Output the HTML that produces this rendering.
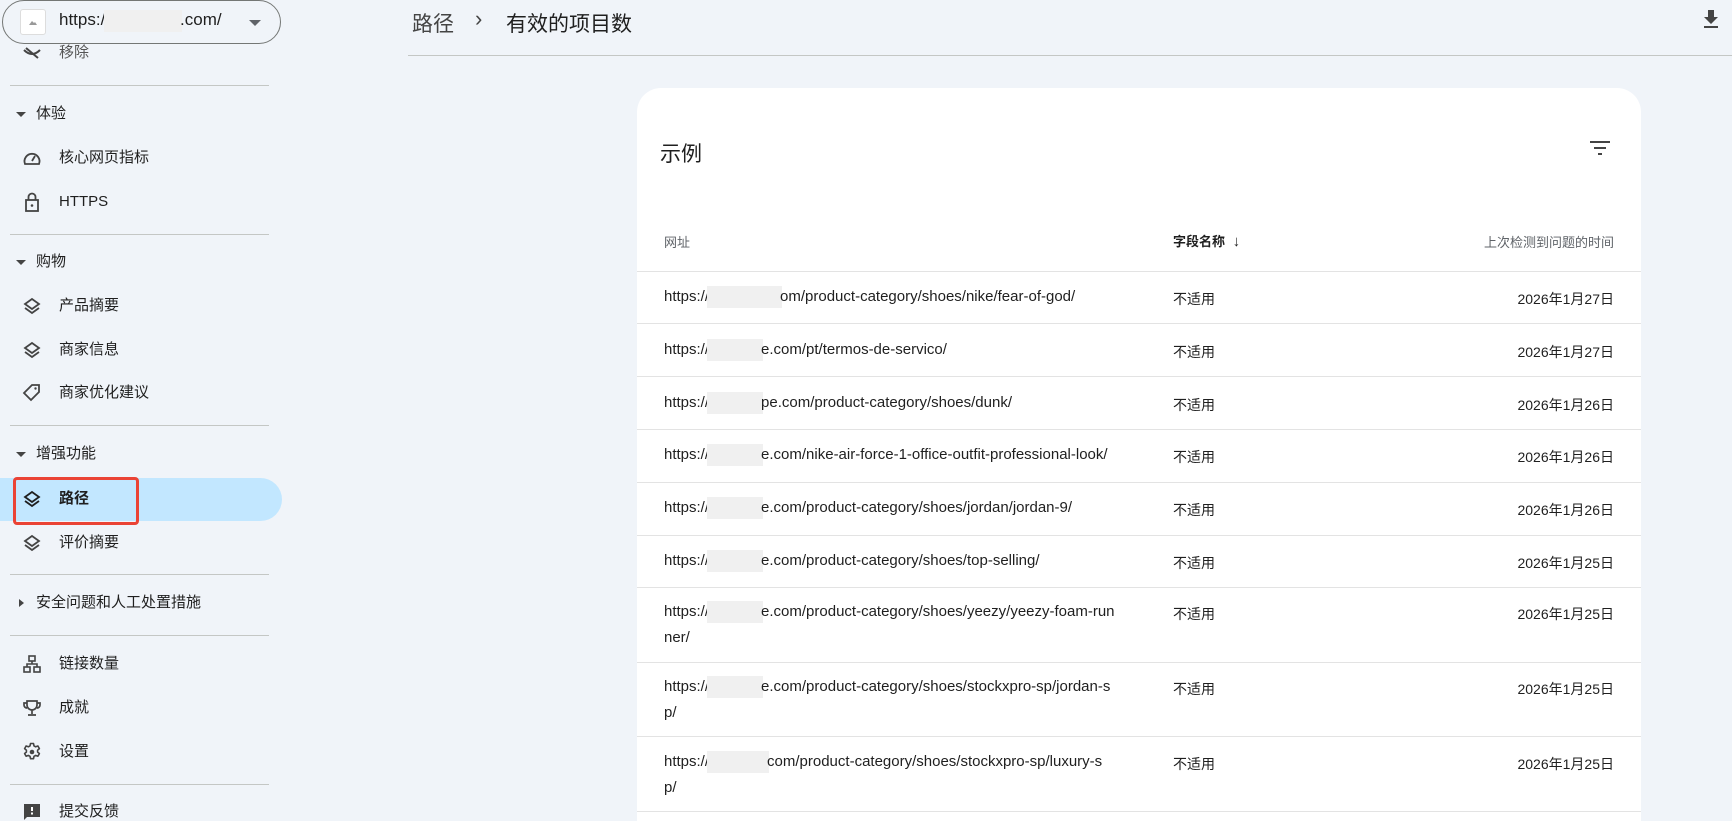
<!DOCTYPE html>
<html><head><meta charset="utf-8"><style>
*{box-sizing:border-box;margin:0;padding:0}
html,body{width:1732px;height:821px;overflow:hidden;background:#f0f4f9}
body{font-family:"Liberation Sans","Noto Sans CJK SC",sans-serif;color:#1f1f1f}
#w{position:relative;width:1732px;height:821px;overflow:hidden}
.a{position:absolute}
.pill{left:2px;top:0;width:279px;height:44px;border:1px solid #747775;border-radius:22px;background:#f0f4f9}
.fav{left:20px;top:9px;width:26px;height:26px;background:#fff;border:1px solid #ddd;border-radius:3px}
.div{position:absolute;left:10px;width:259px;height:1px;background:#c4c7c5}
.it{position:absolute;left:59px;font-size:15px;color:#1f1f1f;line-height:20px}
.sec{position:absolute;left:36px;font-size:15px;line-height:20px;color:#1f1f1f}
.ic{position:absolute;left:22px;width:20px;height:20px}
.tri{position:absolute;left:16px;width:0;height:0;border-left:5px solid transparent;border-right:5px solid transparent;border-top:5px solid #444}
.card{left:637px;top:88px;width:1004px;height:760px;background:#fff;border-radius:24px}
.hl{position:absolute;left:637px;width:1004px;height:1px;background:#e3e3e3}
.u{position:absolute;left:664px;font-size:15px;line-height:26px;color:#1f1f1f;width:460px}
.f{position:absolute;left:1173px;font-size:14px;color:#1f1f1f}
.d{position:absolute;right:118px;font-size:14px;color:#1f1f1f}
.b{display:inline-block;width:60px;height:22px;background:#f0f0f0;vertical-align:-7px;margin:0 -2px}
</style></head><body><div id="w">
<div class="a pill"></div>
<div class="a fav"><svg width="24" height="24" viewBox="0 0 24 24"><path d="M8 15l3-4 2 2 1-1 2 3z" fill="#999"/></svg></div>
<div class="a" style="left:59px;top:10px;font-size:17px;color:#1f1f1f">https://<span class="b" style="width:78px;margin-left:-6px"></span>.com/</div>
<div class="a" style="left:249px;top:20px;border-left:6px solid transparent;border-right:6px solid transparent;border-top:6px solid #5f6368"></div>
<svg class="ic" style="top:44px" viewBox="0 0 20 20"><path d="M2 6q8 8 16 0M4 4l12 10" stroke="#444" stroke-width="2" fill="none"/></svg>
<div class="it" style="top:43px;color:#555">移除</div>
<div class="div" style="top:85px"></div>
<div class="tri" style="top:112px"></div><div class="sec" style="top:104px">体验</div>
<svg class="ic" style="top:148px" viewBox="0 0 20 20"><path d="M3 16a7.5 7.5 0 1 1 14 0z" stroke="#444" stroke-width="1.8" fill="none"/><path d="M10 13l3-5" stroke="#444" stroke-width="1.8"/></svg>
<div class="it" style="top:148px">核心网页指标</div>
<svg class="ic" style="top:192px" viewBox="0 0 20 20"><rect x="4" y="8" width="12" height="11" stroke="#444" stroke-width="1.8" fill="none"/><path d="M6.5 8V5a3.5 3.5 0 0 1 7 0v3" stroke="#444" stroke-width="1.8" fill="none"/><circle cx="10" cy="13.5" r="1.3" fill="#444"/></svg>
<div class="it" style="top:192px">HTTPS</div>
<div class="div" style="top:234px"></div>
<div class="tri" style="top:260px"></div><div class="sec" style="top:252px">购物</div>
<svg class="ic" style="top:296px" viewBox="0 0 20 20"><path d="M10 3l7 5-7 5-7-5z M3 12l7 5 7-5" stroke="#444" stroke-width="1.8" fill="none"/></svg>
<div class="it" style="top:296px">产品摘要</div>
<svg class="ic" style="top:340px" viewBox="0 0 20 20"><path d="M10 3l7 5-7 5-7-5z M3 12l7 5 7-5" stroke="#444" stroke-width="1.8" fill="none"/></svg>
<div class="it" style="top:340px">商家信息</div>
<svg class="ic" style="top:383px" viewBox="0 0 20 20"><path d="M2 10l8-8h7v7l-8 8z" stroke="#444" stroke-width="1.8" fill="none"/><circle cx="13.5" cy="5.5" r="1.2" fill="#444"/></svg>
<div class="it" style="top:383px">商家优化建议</div>
<div class="div" style="top:425px"></div>
<div class="tri" style="top:452px"></div><div class="sec" style="top:444px">增强功能</div>
<div class="a" style="left:0;top:478px;width:282px;height:43px;background:#c2e7ff;border-radius:0 22px 22px 0"></div>
<div class="a" style="left:13px;top:477px;width:126px;height:48px;border:3px solid #ea4335;border-radius:4px"></div>
<svg class="ic" style="top:489px" viewBox="0 0 20 20"><path d="M10 3l7 5-7 5-7-5z M3 12l7 5 7-5" stroke="#1f1f1f" stroke-width="1.8" fill="none"/></svg>
<div class="it" style="top:489px;font-weight:bold">路径</div>
<svg class="ic" style="top:533px" viewBox="0 0 20 20"><path d="M10 3l7 5-7 5-7-5z M3 12l7 5 7-5" stroke="#444" stroke-width="1.8" fill="none"/></svg>
<div class="it" style="top:533px">评价摘要</div>
<div class="div" style="top:574px"></div>
<div class="a" style="left:19px;top:599px;border-top:4px solid transparent;border-bottom:4px solid transparent;border-left:5px solid #444"></div>
<div class="sec" style="top:593px">安全问题和人工处置措施</div>
<div class="div" style="top:635px"></div>
<svg class="ic" style="top:654px" viewBox="0 0 20 20"><rect x="7" y="2" width="6" height="5" stroke="#444" stroke-width="1.6" fill="none"/><rect x="2" y="13" width="6" height="5" stroke="#444" stroke-width="1.6" fill="none"/><rect x="12" y="13" width="6" height="5" stroke="#444" stroke-width="1.6" fill="none"/><path d="M10 7v3H5v3M10 10h5v3" stroke="#444" stroke-width="1.6" fill="none"/></svg>
<div class="it" style="top:654px">链接数量</div>
<svg class="ic" style="top:698px" viewBox="0 0 20 20"><path d="M5 3h10v4a5 5 0 0 1-10 0zM5 5H2v2a3 3 0 0 0 3 3M15 5h3v2a3 3 0 0 1-3 3M10 12v4M6 17h8" stroke="#444" stroke-width="1.7" fill="none"/></svg>
<div class="it" style="top:698px">成就</div>
<svg class="ic" style="top:742px" viewBox="0 0 20 20"><path d="M8.5 1.5h3l.5 2.4 1.6.9 2.3-.8 1.5 2.6-1.8 1.6v1.8l1.8 1.6-1.5 2.6-2.3-.8-1.6.9-.5 2.4h-3l-.5-2.4-1.6-.9-2.3.8-1.5-2.6 1.8-1.6V8.2L2.6 6.6l1.5-2.6 2.3.8 1.6-.9z" stroke="#444" stroke-width="1.6" fill="none" stroke-linejoin="round"/><circle cx="10" cy="10" r="2.3" fill="#444"/></svg>
<div class="it" style="top:742px">设置</div>
<div class="div" style="top:784px"></div>
<svg class="ic" style="top:802px" viewBox="0 0 20 20"><path d="M2 2h16v13H5l-3 3z" fill="#444"/><rect x="9" y="5" width="2" height="4" fill="#fff"/><rect x="9" y="10.5" width="2" height="2" fill="#fff"/></svg>
<div class="it" style="top:802px">提交反馈</div>

<div class="a" style="left:412px;top:8px;font-size:21px;color:#444">路径</div>
<div class="a" style="left:475px;top:6px;font-size:22px;color:#444">›</div>
<div class="a" style="left:506px;top:8px;font-size:21px;color:#1f1f1f">有效的项目数</div>
<svg class="a" style="left:1700px;top:8px" width="22" height="22" viewBox="0 0 22 22"><path d="M8 2h6v7h4l-7 7-7-7h4z" fill="#444"/><rect x="4" y="18" width="14" height="2" fill="#444"/></svg>
<div class="a" style="left:408px;top:55px;width:1324px;height:1px;background:#c4c7c5"></div>

<div class="a card"></div>
<div class="a" style="left:660px;top:138px;font-size:21px">示例</div>
<svg class="a" style="left:1589px;top:139px" width="22" height="18" viewBox="0 0 22 18"><rect x="1" y="2" width="20" height="2" fill="#444"/><rect x="5" y="8" width="12" height="2" fill="#444"/><rect x="9" y="14" width="4" height="2" fill="#444"/></svg>
<div class="a" style="left:664px;top:232px;font-size:13px;color:#5f6368">网址</div>
<div class="a" style="left:1173px;top:231px;font-size:13px;color:#1f1f1f;font-weight:bold">字段名称 <span style="font-weight:normal;font-size:15px;margin-left:4px">↓</span></div>
<div class="a" style="right:118px;top:232px;font-size:13px;color:#5f6368">上次检测到问题的时间</div>
<div class="hl" style="top:271px"></div>

<div class="u" style="top:284px">https://<span class="b" style="width:75px"></span>om/product-category/shoes/nike/fear-of-god/</div>
<div class="f" style="top:289px">不适用</div><div class="d" style="top:289px">2026年1月27日</div>
<div class="hl" style="top:323px"></div>
<div class="u" style="top:337px">https://<span class="b" style="width:56px"></span>e.com/pt/termos-de-servico/</div>
<div class="f" style="top:342px">不适用</div><div class="d" style="top:342px">2026年1月27日</div>
<div class="hl" style="top:376px"></div>
<div class="u" style="top:390px">https://<span class="b" style="width:56px"></span>pe.com/product-category/shoes/dunk/</div>
<div class="f" style="top:395px">不适用</div><div class="d" style="top:395px">2026年1月26日</div>
<div class="hl" style="top:429px"></div>
<div class="u" style="top:442px">https://<span class="b" style="width:56px"></span>e.com/nike-air-force-1-office-outfit-professional-look/</div>
<div class="f" style="top:447px">不适用</div><div class="d" style="top:447px">2026年1月26日</div>
<div class="hl" style="top:482px"></div>
<div class="u" style="top:495px">https://<span class="b" style="width:56px"></span>e.com/product-category/shoes/jordan/jordan-9/</div>
<div class="f" style="top:500px">不适用</div><div class="d" style="top:500px">2026年1月26日</div>
<div class="hl" style="top:535px"></div>
<div class="u" style="top:548px">https://<span class="b" style="width:56px"></span>e.com/product-category/shoes/top-selling/</div>
<div class="f" style="top:553px">不适用</div><div class="d" style="top:553px">2026年1月25日</div>
<div class="hl" style="top:587px"></div>
<div class="u" style="top:599px">https://<span class="b" style="width:56px"></span>e.com/product-category/shoes/yeezy/yeezy-foam-run<br>ner/</div>
<div class="f" style="top:604px">不适用</div><div class="d" style="top:604px">2026年1月25日</div>
<div class="hl" style="top:662px"></div>
<div class="u" style="top:674px">https://<span class="b" style="width:56px"></span>e.com/product-category/shoes/stockxpro-sp/jordan-s<br>p/</div>
<div class="f" style="top:679px">不适用</div><div class="d" style="top:679px">2026年1月25日</div>
<div class="hl" style="top:736px"></div>
<div class="u" style="top:749px">https://<span class="b" style="width:62px"></span>com/product-category/shoes/stockxpro-sp/luxury-s<br>p/</div>
<div class="f" style="top:754px">不适用</div><div class="d" style="top:754px">2026年1月25日</div>
<div class="hl" style="top:811px"></div>
</div></body></html>
